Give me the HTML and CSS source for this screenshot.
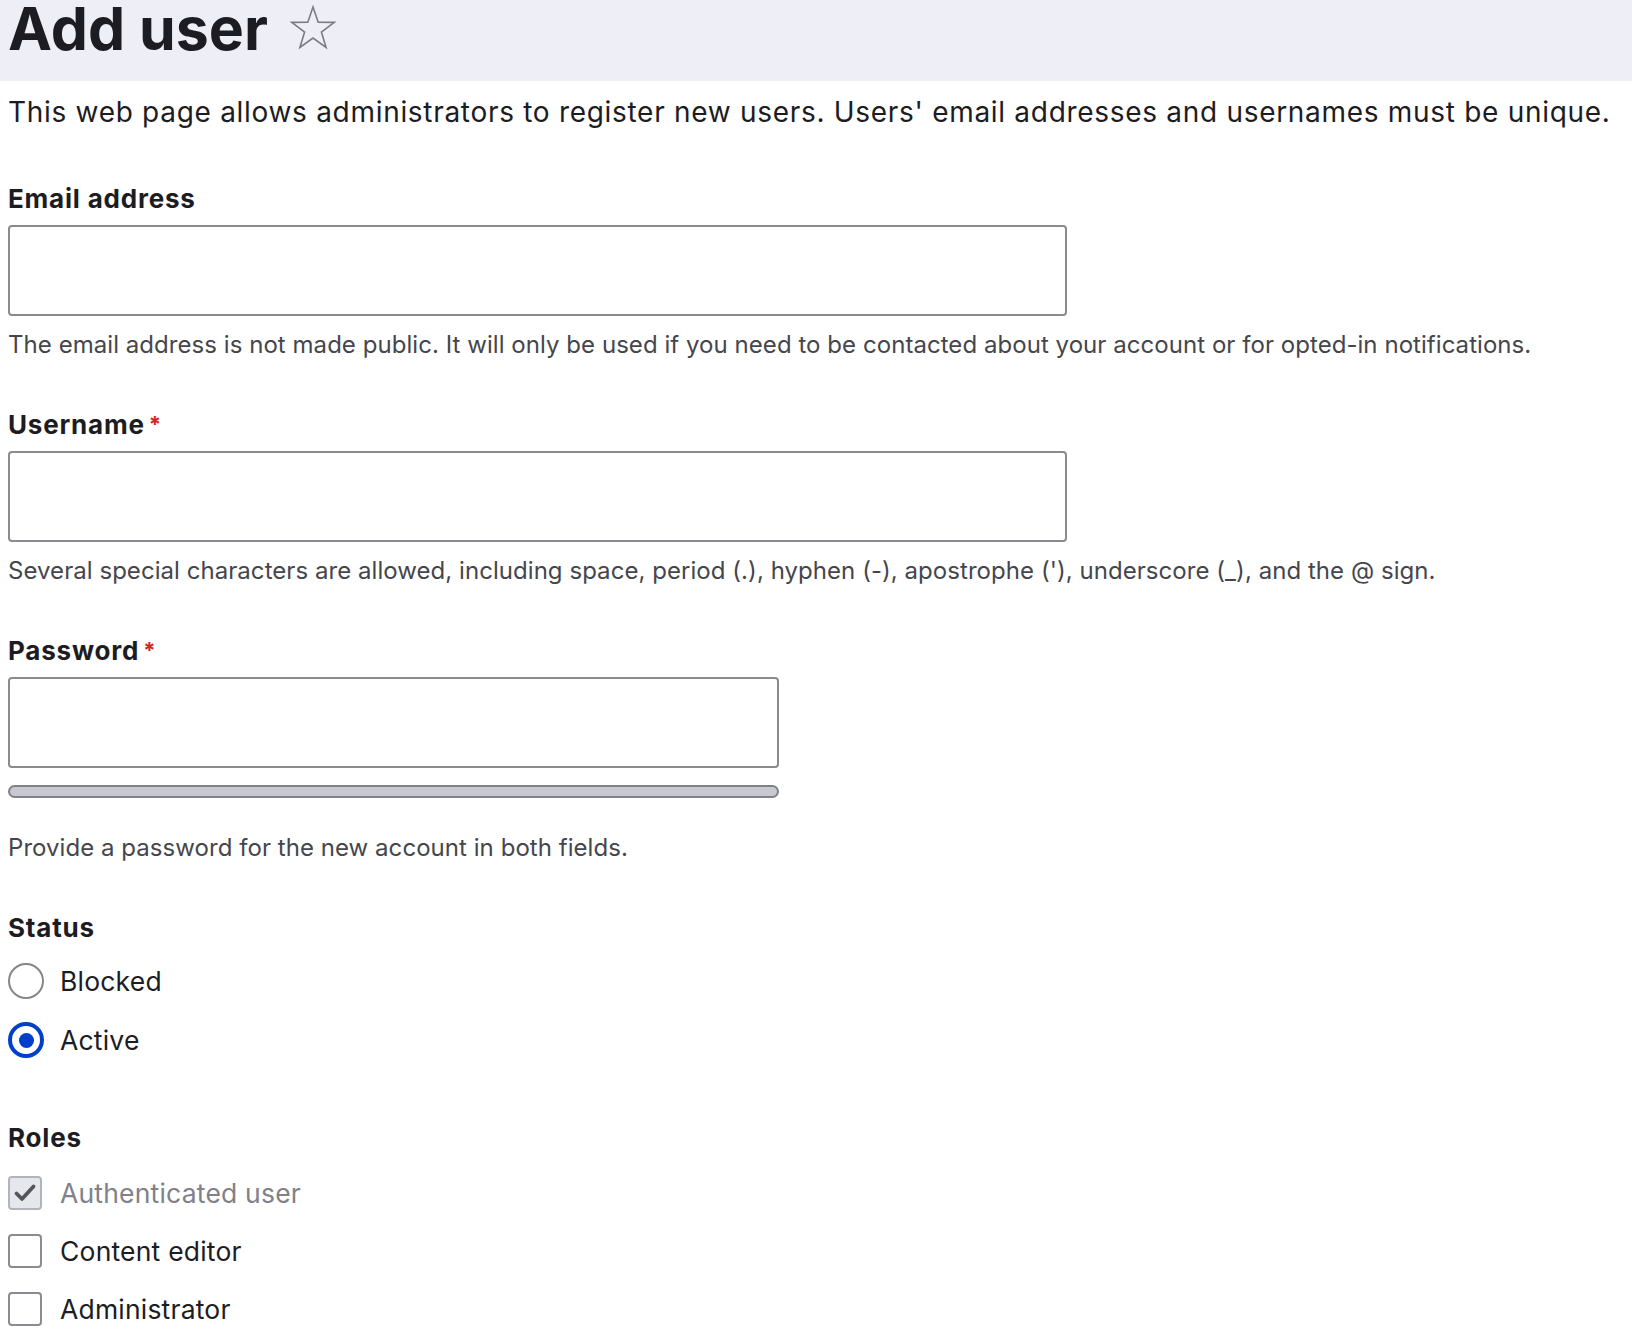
FILE: index.html
```html
<!DOCTYPE html>
<html lang="en">
<head>
<meta charset="utf-8">
<title>Add user</title>
<link rel="stylesheet" href="styles.css">
</head>
<body>
<header class="page-head">
  <h1 class="title">Add user</h1>
  <svg class="star" viewBox="0 0 46 45" width="46" height="45" aria-hidden="true">
    <polygon points="23,2 28.2,17.2 44.2,17.4 31.4,27 36.1,42.4 23,33.1 9.9,42.4 14.6,27 1.8,17.4 17.8,17.2" fill="none" stroke="#7c7d83" stroke-width="1.6" stroke-linejoin="miter"/>
  </svg>
</header>
<main class="content">
  <p class="intro">This web page allows administrators to register new users. Users' email addresses and usernames must be unique.</p>

  <div class="field field-first">
    <label class="label">Email address</label>
    <div class="input"></div>
    <p class="desc">The email address is not made public. It will only be used if you need to be contacted about your account or for opted-in notifications.</p>
  </div>

  <div class="field">
    <label class="label">Username<span class="req">*</span></label>
    <div class="input"></div>
    <p class="desc">Several special characters are allowed, including space, period (.), hyphen (-), apostrophe ('), underscore (_), and the @ sign.</p>
  </div>

  <div class="field">
    <label class="label">Password<span class="req">*</span></label>
    <div class="input input-short"></div>
    <div class="strength"></div>
    <p class="desc desc-pass">Provide a password for the new account in both fields.</p>
  </div>

  <fieldset class="group group-status">
    <legend class="label legend">Status</legend>
    <div class="option">
      <span class="radio"></span>
      <span class="opt-text">Blocked</span>
    </div>
    <div class="option">
      <span class="radio radio-on"><span class="dot"></span></span>
      <span class="opt-text">Active</span>
    </div>
  </fieldset>

  <fieldset class="group group-roles">
    <legend class="label legend">Roles</legend>
    <div class="option">
      <span class="check check-disabled">
        <svg viewBox="0 0 30 30" width="30" height="30" aria-hidden="true"><path d="M6.5 15.5 L12 21 L23.5 8.5" fill="none" stroke="#55565b" stroke-width="3.8" stroke-linecap="round" stroke-linejoin="round"/></svg>
      </span>
      <span class="opt-text opt-disabled">Authenticated user</span>
    </div>
    <div class="option">
      <span class="check"></span>
      <span class="opt-text">Content editor</span>
    </div>
    <div class="option">
      <span class="check"></span>
      <span class="opt-text">Administrator</span>
    </div>
  </fieldset>
</main>
</body>
</html>
```

FILE: styles.css
```css
html, body {
  margin: 0;
  padding: 0;
  background: #ffffff;
}

body {
  font-family: Inter, "Noto Sans", "Liberation Sans", sans-serif;
  color: #222330;
}

.page-head {
  background: #eeeff6;
  height: 81px;
  box-sizing: border-box;
  padding: 0 8px;
  display: flex;
  align-items: flex-start;
}

.title {
  margin: 0;
  font-size: 59px;
  line-height: 58px;
  font-weight: 700;
  letter-spacing: 0;
  color: #1c1c22;
}

.star {
  margin-left: 22px;
  margin-top: 5px;
  flex: none;
}

.content {
  padding: 0 8px;
}

.intro {
  margin: 11px 0 0 0;
  font-size: 28px;
  line-height: 40px;
  letter-spacing: 0.7px;
  color: #1c1c22;
}

.field {
  margin-top: 50px;
}

.field-first {
  margin-top: 52px;
}

.label {
  display: block;
  font-size: 26px;
  line-height: 30px;
  font-weight: 700;
  letter-spacing: 0.8px;
  color: #1c1c22;
  margin-bottom: 11px;
}

.req {
  color: #d72222;
  font-size: 22px;
  line-height: 0;
  margin-left: 4px;
  position: relative;
  top: -2px;
}

.input {
  width: 1059px;
  height: 91px;
  box-sizing: border-box;
  border: 2px solid #8a8b92;
  border-radius: 4px;
  background: #fff;
}

.input-short {
  width: 771px;
}

.strength {
  width: 771px;
  height: 13px;
  box-sizing: border-box;
  margin-top: 17px;
  border: 2px solid #818289;
  border-radius: 8px;
  background: #c8c9d0;
}

.desc {
  margin: 14px 0 0 0;
  font-size: 24px;
  line-height: 30px;
  letter-spacing: 0.05px;
  color: #45464c;
}

.desc-pass {
  margin-top: 35px;
}

.group {
  border: 0;
  padding: 0;
  margin: 0;
  min-width: 0;
}

.group-status {
  margin-top: 50px;
}

.group-roles {
  margin-top: 65px;
}

.legend {
  padding: 0;
  margin-bottom: 0;
}

.option {
  display: flex;
  align-items: center;
  margin-top: 23px;
  height: 36px;
}

.group-status .option:first-of-type {
  margin-top: 20px;
}

.group-roles .option {
  height: 34px;
  margin-top: 24px;
}

.group-roles .option:first-of-type {
  margin-top: 23px;
}

.radio {
  width: 36px;
  height: 36px;
  box-sizing: border-box;
  border: 2px solid #85868d;
  border-radius: 50%;
  background: #fff;
  flex: none;
  display: flex;
  align-items: center;
  justify-content: center;
}

.radio-on {
  border: 4px solid #003ecc;
}

.dot {
  width: 15px;
  height: 15px;
  border-radius: 50%;
  background: #003ecc;
}

.check {
  width: 34px;
  height: 34px;
  box-sizing: border-box;
  border: 2px solid #8a8b92;
  border-radius: 4px;
  background: #fff;
  flex: none;
  display: flex;
  align-items: center;
  justify-content: center;
}

.check-disabled {
  background: #e6e7ed;
  border-color: #b3b4bb;
}

.opt-text {
  margin-left: 16px;
  font-size: 26.5px;
  line-height: 36px;
  letter-spacing: 0.2px;
  color: #1c1c22;
}

.group-roles .opt-text {
  margin-left: 18px;
}

.opt-disabled {
  color: #808189;
}
```
